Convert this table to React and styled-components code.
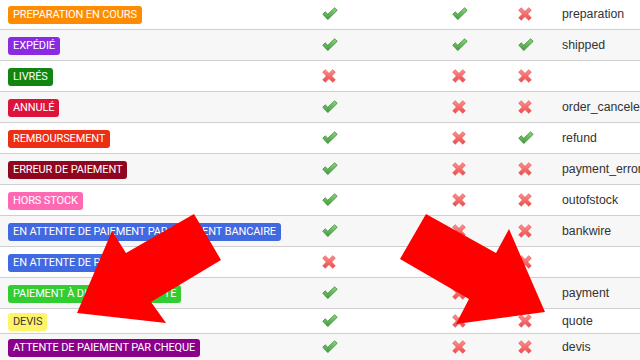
import React from "react";
import styled, { createGlobalStyle } from "styled-components";

const Global = createGlobalStyle`
  html, body {
    margin: 0;
    padding: 0;
    background: #ffffff;
    overflow: hidden;
  }
`;

const states = [
  { label: "PREPARATION EN COURS", color: "#FF8C00", a: 1, b: 1, c: 0, tpl: "preparation" },
  { label: "EXPÉDIÉ", color: "#8A2BE2", a: 1, b: 1, c: 1, tpl: "shipped" },
  { label: "LIVRÉS", color: "#108510", a: 0, b: 0, c: 0, tpl: "" },
  { label: "ANNULÉ", color: "#DC143C", a: 1, b: 0, c: 0, tpl: "order_canceled" },
  { label: "REMBOURSEMENT", color: "#EC2E15", a: 1, b: 0, c: 1, tpl: "refund" },
  { label: "ERREUR DE PAIEMENT", color: "#8F0621", a: 1, b: 0, c: 0, tpl: "payment_error" },
  { label: "HORS STOCK", color: "#FF69B4", a: 1, b: 0, c: 0, tpl: "outofstock" },
  { label: "EN ATTENTE DE PAIEMENT PAR VIREMENT BANCAIRE", color: "#4169E1", a: 1, b: 0, c: 0, tpl: "bankwire" },
  { label: "EN ATTENTE DE PAIEMENT PAYPAL", color: "#4169E1", a: 0, b: 0, c: 0, tpl: "" },
  { label: "PAIEMENT À DISTANCE ACCEPTE", color: "#32CD32", a: 1, b: 0, c: 0, tpl: "payment" },
  { label: "DEVIS", color: "#FFF468", dark: true, a: 1, b: 0, c: 0, tpl: "quote", h: 24 },
  { label: "ATTENTE DE PAIEMENT PAR CHEQUE", color: "#8B008B", a: 1, b: 0, c: 0, tpl: "devis", h: 26 },
];

function Check() {
  return (
    <svg width="16" height="14" viewBox="0 0 16 14">
      <defs>
        <linearGradient id="gck" x1="0" y1="0" x2="0" y2="1">
          <stop offset="0" stopColor="#8fd77f" />
          <stop offset="1" stopColor="#3f9a3a" />
        </linearGradient>
      </defs>
      <polygon
        points="0.8,7.2 3.2,4.8 5.8,7.3 12.6,0.8 15.2,3.3 5.8,12.6"
        fill="url(#gck)"
        stroke="#3a8a34"
        strokeWidth="0.8"
        strokeLinejoin="round"
      />
    </svg>
  );
}

function Cross() {
  return (
    <svg width="14" height="14" viewBox="0 0 14 14">
      <defs>
        <linearGradient id="gcx" x1="0" y1="0" x2="0" y2="1">
          <stop offset="0" stopColor="#ff8f8f" />
          <stop offset="1" stopColor="#ec4a4a" />
        </linearGradient>
      </defs>
      <polygon
        points="0.7,3.2 3.2,0.7 7,4.4 10.8,0.7 13.3,3.2 9.6,7 13.3,10.8 10.8,13.3 7,9.6 3.2,13.3 0.7,10.8 4.4,7"
        fill="url(#gcx)"
        stroke="#e65454"
        strokeWidth="0.7"
        strokeLinejoin="round"
      />
    </svg>
  );
}

function Flag({ on }) {
  return <IconCell>{on ? <Check /> : <Cross />}</IconCell>;
}

export default function App() {
  return (
    <>
      <Global />
      <Page>
        <Table>
          {states.map((s, i) => (
            <Row key={s.label} $odd={i % 2 === 1} $h={s.h || 30}>
              <NameCell>
                <Badge $bg={s.color} $dark={s.dark}>{s.label}</Badge>
              </NameCell>
              <Flag on={s.a} />
              <Flag on={s.b} />
              <Flag on={s.c} />
              <Template>{s.tpl}</Template>
            </Row>
          ))}
        </Table>
        <Arrows width="640" height="360" viewBox="0 0 640 360">
          <polygon
            points="194,214 221,260 151,302 166,323 77,313 112,231 126,253"
            fill="#ff0000"
          />
          <polygon
            points="426,214 400,259 469,299 456,324 545,312 509,229 496,253"
            fill="#ff0000"
          />
        </Arrows>
      </Page>
    </>
  );
}

const Page = styled.div`
  position: relative;
  width: 640px;
  height: 360px;
  overflow: hidden;
`;

const Table = styled.div`
  margin-top: -1px;
  display: flex;
  flex-direction: column;
`;

const Row = styled.div`
  display: grid;
  grid-template-columns: 300px 130px 66px 60px 1fr;
  align-items: center;
  height: ${(p) => p.$h}px;
  border-bottom: 1px solid #cfcfcf;
  background: ${(p) => (p.$odd ? "#f7f7f7" : "#ffffff")};
`;

const NameCell = styled.div`
  padding-left: 8px;
  white-space: nowrap;
`;

const Badge = styled.span`
  display: inline-block;
  height: 18px;
  line-height: 18px;
  padding: 0 5px;
  border-radius: 3px;
  background: ${(p) => p.$bg};
  color: ${(p) => (p.$dark ? "#383838" : "#ffffff")};
  font-family: Roboto, "Liberation Sans", sans-serif;
  font-size: 11px;
  letter-spacing: -0.12px;
`;

const IconCell = styled.div`
  display: flex;
  align-items: center;
  padding-left: 22px;
  height: 14px;
`;

const Template = styled.div`
  padding-left: 6px;
  font-family: "Liberation Sans", Arial, sans-serif;
  font-size: 12.3px;
  color: #333333;
  white-space: nowrap;
  overflow: hidden;
`;

const Arrows = styled.svg`
  position: absolute;
  left: 0;
  top: 0;
  pointer-events: none;
`;
